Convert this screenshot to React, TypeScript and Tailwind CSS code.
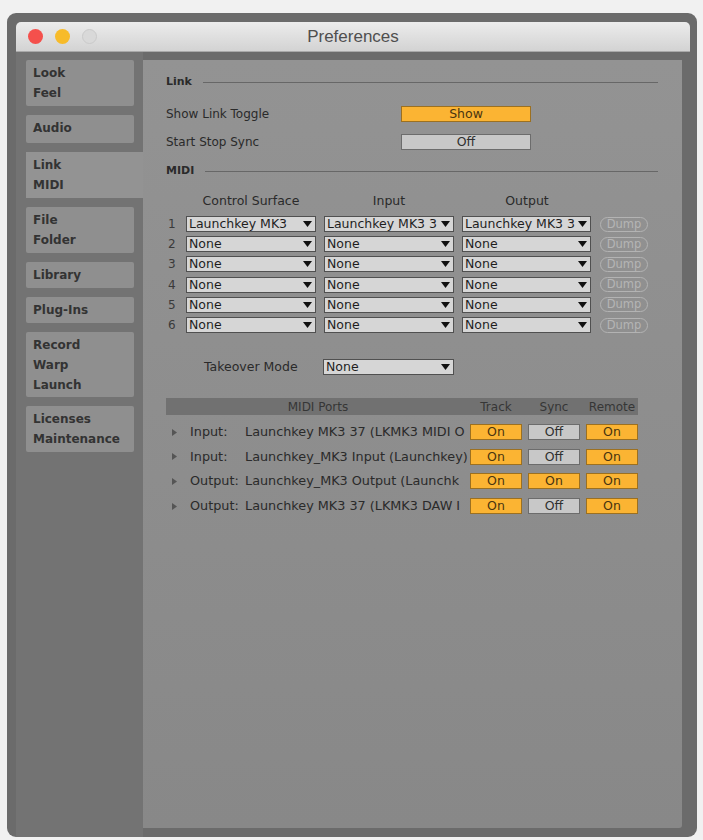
import React from "react";

const F = "font-['DejaVu_Sans',sans-serif]";

function Arrow() {
  return (
    <svg width="9" height="6" viewBox="0 0 9 6" className="shrink-0 mr-[3px] ml-[1px]">
      <path d="M0 0 H9 L4.5 6 Z" fill="#111" />
    </svg>
  );
}

function Dropdown({ text, w = "w-[130px]" }: { text: string; w?: string }) {
  return (
    <div className={`${w} h-[16px] bg-[#d6d6d6] border border-[#505050] flex items-center shrink-0`}>
      <span className="flex-1 overflow-hidden whitespace-nowrap pl-[2px] text-[12.5px] leading-[14px] text-[#1e1e1e]">
        {text}
      </span>
      <Arrow />
    </div>
  );
}

function Heading({ text }: { text: string }) {
  return (
    <div className="h-[16px] flex items-center">
      <span className="text-[11px] font-bold text-[#2a2a2a] leading-[16px]">{text}</span>
      <div className="flex-1 ml-[11px] h-px bg-[#676767]" />
    </div>
  );
}

function Toggle({ on, label, w = "w-[52px]" }: { on: boolean; label: string; w?: string }) {
  return (
    <div
      className={`${w} h-[16px] flex items-center justify-center text-[12.5px] leading-[14px] border shrink-0 ${
        on ? "bg-[#fbb433] border-[#9c7020] text-[#4a3510]" : "bg-[#c8c8c8] border-[#6c6c6c] text-[#303030]"
      }`}
    >
      {label}
    </div>
  );
}

const tabs: { lines: string[]; h: string; sel?: boolean }[] = [
  { lines: ["Look", "Feel"], h: "h-[46px]" },
  { lines: ["Audio"], h: "h-[28px]" },
  { lines: ["Link", "MIDI"], h: "h-[46px]", sel: true },
  { lines: ["File", "Folder"], h: "h-[46px]" },
  { lines: ["Library"], h: "h-[26px]" },
  { lines: ["Plug-Ins"], h: "h-[26px]" },
  { lines: ["Record", "Warp", "Launch"], h: "h-[65px]" },
  { lines: ["Licenses", "Maintenance"], h: "h-[46px]" },
];

const midiRows = [
  ["Launchkey MK3", "Launchkey MK3 3", "Launchkey MK3 3"],
  ["None", "None", "None"],
  ["None", "None", "None"],
  ["None", "None", "None"],
  ["None", "None", "None"],
  ["None", "None", "None"],
];

const ports = [
  { kind: "Input:", name: "Launchkey MK3 37 (LKMK3 MIDI O", t: true, s: false, r: true },
  { kind: "Input:", name: "Launchkey_MK3 Input (Launchkey)", t: true, s: false, r: true },
  { kind: "Output:", name: "Launchkey_MK3 Output (Launchk", t: true, s: true, r: true },
  { kind: "Output:", name: "Launchkey MK3 37 (LKMK3 DAW I", t: true, s: false, r: true },
];

export default function App() {
  return (
    <div className={`w-[703px] h-[840px] bg-[#f1f1f1] pt-[13px] pl-[7px] ${F}`}>
      <div className="w-[690px] h-[824px] rounded-[9px] bg-[#6b6b6b] pl-[9px] pr-[7px] pt-[9px] flex flex-col">
        {/* title bar */}
        <div className="h-[30px] shrink-0 rounded-t-[5px] bg-gradient-to-b from-[#ececec] to-[#d3d3d3] border-b border-[#a9a9a9] relative flex items-center justify-center">
          <div className="absolute left-[12px] top-[7px] flex gap-[12px]">
            <div className="w-[15px] h-[15px] rounded-full bg-[#f4504c]" />
            <div className="w-[15px] h-[15px] rounded-full bg-[#f7bb2a]" />
            <div className="w-[15px] h-[15px] rounded-full bg-[#d9d9d9] border border-[#cacaca]" />
          </div>
          <span className="font-['Liberation_Sans',sans-serif] text-[17px] text-[#4f4f4f] leading-[20px]">
            Preferences
          </span>
        </div>
        {/* body */}
        <div className="flex flex-1 min-h-0">
          <div className="w-[127px] shrink-0 bg-[#737373] pl-[10px] pt-[8px] flex flex-col gap-[9px]">
            {tabs.map((t) => (
              <div
                key={t.lines[0]}
                className={`${t.h} ${
                  t.sel ? "w-[117px] bg-[#939393]" : "w-[108px] bg-[#8f8f8f] rounded-[2px]"
                } pl-[7px] pt-[3px] flex flex-col`}
              >
                {t.lines.map((l) => (
                  <span key={l} className="text-[12px] font-bold leading-[20px] text-[#333333]">
                    {l}
                  </span>
                ))}
              </div>
            ))}
          </div>
          <div className="w-[539px] shrink-0 mt-[8px] mb-[9px] bg-gradient-to-b from-[#939393] to-[#888888] rounded-br-[3px] pl-[23px] pr-[24px] pt-[14px] flex flex-col text-[#2a2a2a]">
            <Heading text="Link" />
            <div className="mt-[16px] h-[16px] flex items-center">
              <span className="w-[235px] text-[12px] leading-[16px]">Show Link Toggle</span>
              <Toggle on label="Show" w="w-[130px]" />
            </div>
            <div className="mt-[12px] h-[16px] flex items-center">
              <span className="w-[235px] text-[12px] leading-[16px]">Start Stop Sync</span>
              <Toggle on={false} label="Off" w="w-[130px]" />
            </div>
            <div className="mt-[13px]">
              <Heading text="MIDI" />
            </div>
            <div className="mt-[14px] h-[16px] flex items-center text-[12.5px] leading-[16px]">
              <span className="w-[20px]" />
              <div className="flex gap-[8px]">
                <span className="w-[130px] text-center">Control Surface</span>
                <span className="w-[130px] text-center">Input</span>
                <span className="w-[130px] text-center">Output</span>
              </div>
            </div>
            <div className="mt-[5px] flex flex-col">
              {midiRows.map((r, i) => (
                <div key={i} className="h-[20.2px] flex items-center">
                  <span className="w-[20px] pl-[2px] text-[12px] leading-[16px] text-[#3a3a3a]">{i + 1}</span>
                  <div className="flex gap-[8px] items-center">
                    <Dropdown text={r[0]} />
                    <Dropdown text={r[1]} />
                    <Dropdown text={r[2]} w="w-[129px]" />
                    <div className="ml-[1px] w-[48px] h-[15px] rounded-full border border-[#b3b3b3] flex items-center justify-center text-[11.5px] leading-[13px] text-[#b5b5b5]">
                      Dump
                    </div>
                  </div>
                </div>
              ))}
            </div>
            <div className="mt-[24px] h-[16px] flex items-center">
              <span className="ml-[38px] w-[119px] text-[12.5px] leading-[16px]">Takeover Mode</span>
              <Dropdown text="None" w="w-[131px]" />
            </div>
            <div className="mt-[23px] w-[472px] h-[17px] bg-[#717171] flex items-center text-[12px] leading-[16px] text-[#363636]">
              <span className="w-[304px] text-center">MIDI Ports</span>
              <span className="w-[52px] text-center">Track</span>
              <span className="w-[6px]" />
              <span className="w-[52px] text-center">Sync</span>
              <span className="w-[6px]" />
              <span className="w-[52px] text-center">Remote</span>
            </div>
            <div className="mt-[4.6px] flex flex-col w-[472px]">
              {ports.map((p, i) => (
                <div key={i} className="h-[24.7px] flex items-center">
                  <div className="w-[304px] flex items-center overflow-hidden whitespace-nowrap text-[12.8px] leading-[16px]">
                    <svg width="5" height="7" viewBox="0 0 5 7" className="ml-[6px] shrink-0">
                      <path d="M0 0 L5 3.5 L0 7 Z" fill="#555" />
                    </svg>
                    <span className="ml-[13px] w-[55px] shrink-0">{p.kind}</span>
                    <span className="overflow-hidden">{p.name}</span>
                  </div>
                  <div className="flex gap-[6px]">
                    <Toggle on={p.t} label={p.t ? "On" : "Off"} />
                    <Toggle on={p.s} label={p.s ? "On" : "Off"} />
                    <Toggle on={p.r} label={p.r ? "On" : "Off"} />
                  </div>
                </div>
              ))}
            </div>
          </div>
        </div>
      </div>
    </div>
  );
}
